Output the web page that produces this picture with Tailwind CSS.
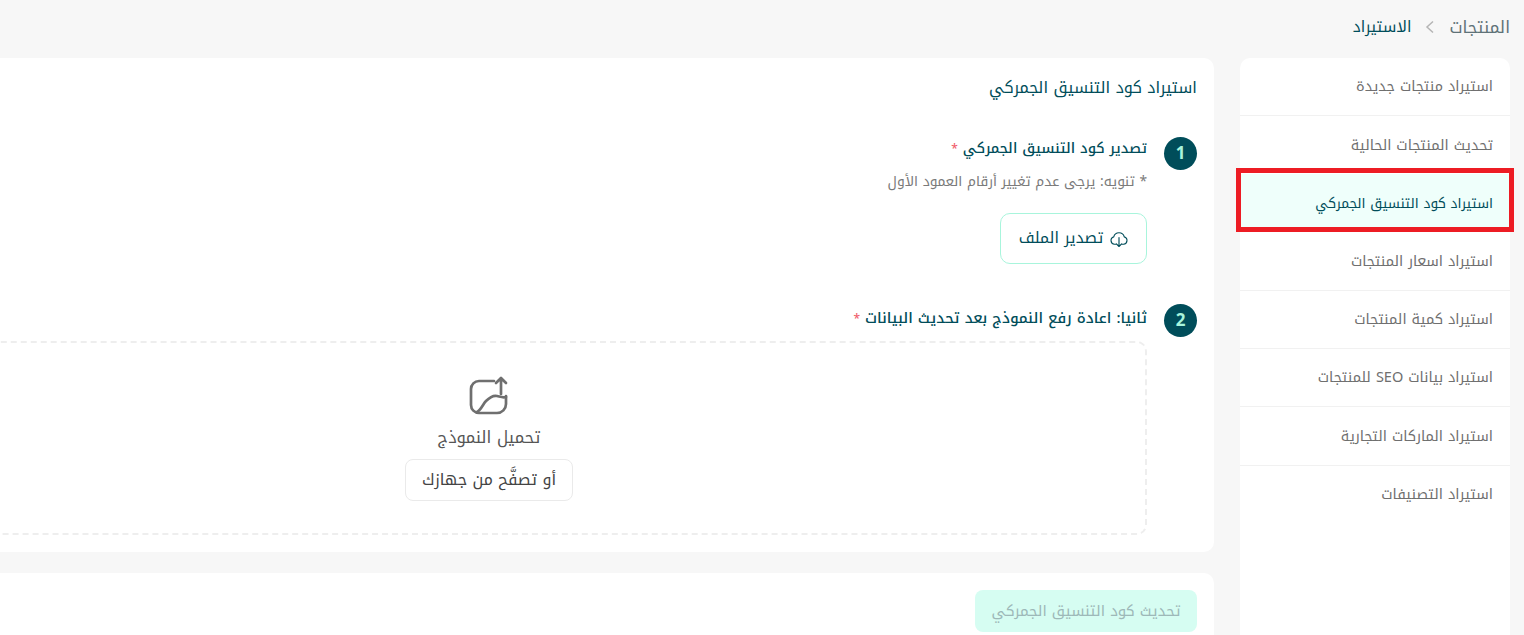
<!DOCTYPE html>
<html lang="ar" dir="rtl">
<head>
<meta charset="utf-8">
<script src="https://cdn.jsdelivr.net/npm/@tailwindcss/browser@4"></script>
</head>
<body class="bg-[#f7f7f7] h-[635px] overflow-hidden relative font-['Noto_Kufi_Arabic','Noto_Sans',sans-serif] text-[14px] text-[#004d5a]">
<div class="w-[1800px] pr-[14px] pt-[14px]">
  <nav class="flex items-center gap-[11px] h-[22px] pt-[3px] text-[15.5px] leading-[22px]">
    <span class="text-[#5f7278] text-[16.8px]">المنتجات</span>
    <svg class="w-[16px] h-[16px] text-[#b5b5b5]" viewBox="0 0 16 16" fill="none" stroke="currentColor" stroke-width="1.5"><path d="M11 2.500 5 8l6 5.500"/></svg>
    <span class="text-[#004d5a]">الاستيراد</span>
  </nav>
  <div class="flex gap-[26px] mt-[22px] items-start">
    <aside class="w-[270px] shrink-0 bg-white rounded-t-[10px] h-[600px] text-[14.5px] text-[#6f6f6f]">
      <div class="h-[58px] flex items-center px-[17px] pt-[1px] border-b border-[#f1f1f1]">استيراد منتجات جديدة</div>
      <div class="h-[58px] flex items-center px-[17px] pt-[1px]">تحديث المنتجات الحالية</div>
      <div class="h-[58px] flex items-center px-[17px] bg-[#effffb] text-[#004d5a] text-[13.7px]">استيراد كود التنسيق الجمركي</div>
      <div class="h-[59px] flex items-center px-[17px] pt-[1px] border-b border-[#f1f1f1]">استيراد اسعار المنتجات</div>
      <div class="h-[58px] flex items-center px-[17px] pt-[1px] border-b border-[#f1f1f1]">استيراد كمية المنتجات</div>
      <div class="h-[58px] flex items-center px-[17px] pt-[1px] border-b border-[#f1f1f1]">استيراد بيانات SEO للمنتجات</div>
      <div class="h-[59px] flex items-center px-[17px] pt-[1px] border-b border-[#f1f1f1]">استيراد الماركات التجارية</div>
      <div class="h-[58px] flex items-center px-[17px]">استيراد التصنيفات</div>
    </aside>
    <main class="w-[1450px] shrink-0 flex flex-col gap-[21px]">
      <section class="bg-white rounded-[10px] h-[494px] pt-[17px] pr-[17px] pl-[67px]">
        <h1 class="text-[16px] leading-[26px] font-normal text-[#004d5a]">استيراد كود التنسيق الجمركي</h1>
        <div class="flex gap-[17px] mt-[36px]">
          <div class="w-[33px] h-[33px] rounded-full bg-[#004d5a] text-[#a8f5dc] flex items-center justify-center text-[17px] font-bold shrink-0" dir="ltr">1</div>
          <div>
            <div class="text-[14.3px] leading-[24px] font-medium">تصدير كود التنسيق الجمركي <span class="text-[#f0616d] text-[12px]">*</span></div>
            <p class="text-[13.8px] leading-[22px] text-[#7a7a7a] mt-[9px]">* تنويه: يرجى عدم تغيير أرقام العمود الأول</p>
            <button class="mt-[21px] w-[147px] h-[51px] rounded-[10px] border border-[#a8f5dc] flex items-center justify-center gap-[7px] text-[15.6px] text-[#004d5a]">
              <svg class="w-[18px] h-[18px] shrink-0" viewBox="0 0 24 24" fill="none" stroke="currentColor" stroke-width="1.500" stroke-linecap="round" stroke-linejoin="round"><path d="M8 19H6a5 5 0 0 1-1-9.800 7.200 7.200 0 0 1 14 0A5 5 0 0 1 18 19h-2"/><path d="M12 10v12m-3.500-3.500L12 22l3.500-3.500"/></svg>
              تصدير الملف
            </button>
          </div>
        </div>
        <div class="flex gap-[17px] mt-[40px]">
          <div class="w-[33px] h-[33px] rounded-full bg-[#004d5a] text-[#a8f5dc] flex items-center justify-center text-[17px] font-bold shrink-0" dir="ltr">2</div>
          <div class="flex-1">
            <div class="text-[14.9px] leading-[24px] pt-[2px] font-medium">ثانيا: اعادة رفع النموذج بعد تحديث البيانات <span class="text-[#f0616d] text-[12px]">*</span></div>
            <div class="mt-[10px] h-[194px] rounded-[10px] border-2 border-dashed border-[#eeeeee] flex flex-col items-center pt-[33px]">
              <svg class="w-[40px] h-[40px] text-[#6f6f6f]" viewBox="0 0 40 40" fill="none" stroke="currentColor" stroke-width="2.7" stroke-linecap="round" stroke-linejoin="round"><path d="M25 5H10a8 8 0 0 0-8 8v16a8 8 0 0 0 8 8h18a9 9 0 0 0 9-9v-8"/><path d="M8 36c4-2 6-8 9-11s7-6 11-5 6 2 9 1"/><path d="M32 18V2m-5 5 5-5 5 5"/></svg>
              <div class="mt-[10px] text-[16.5px] leading-[24px] text-[#555]">تحميل النموذج</div>
              <button class="mt-[9px] w-[168px] h-[42px] rounded-[8px] border border-[#eaeaea] text-[16px] text-[#444]">أو تصفَّح من جهازك</button>
            </div>
          </div>
        </div>
      </section>
      <section class="bg-white rounded-t-[10px] h-[80px] pt-[17px] pr-[17px]">
        <button class="w-[222px] h-[42px] rounded-[8px] bg-[#d6fdf2] text-[#9db8b8] text-[15px]">تحديث كود التنسيق الجمركي</button>
      </section>
    </main>
  </div>
</div>
<div class="absolute left-[1236px] top-[168px] w-[278px] h-[64px] border-[5px] border-[#ed1c24] pointer-events-none"></div>
</body>
</html>
